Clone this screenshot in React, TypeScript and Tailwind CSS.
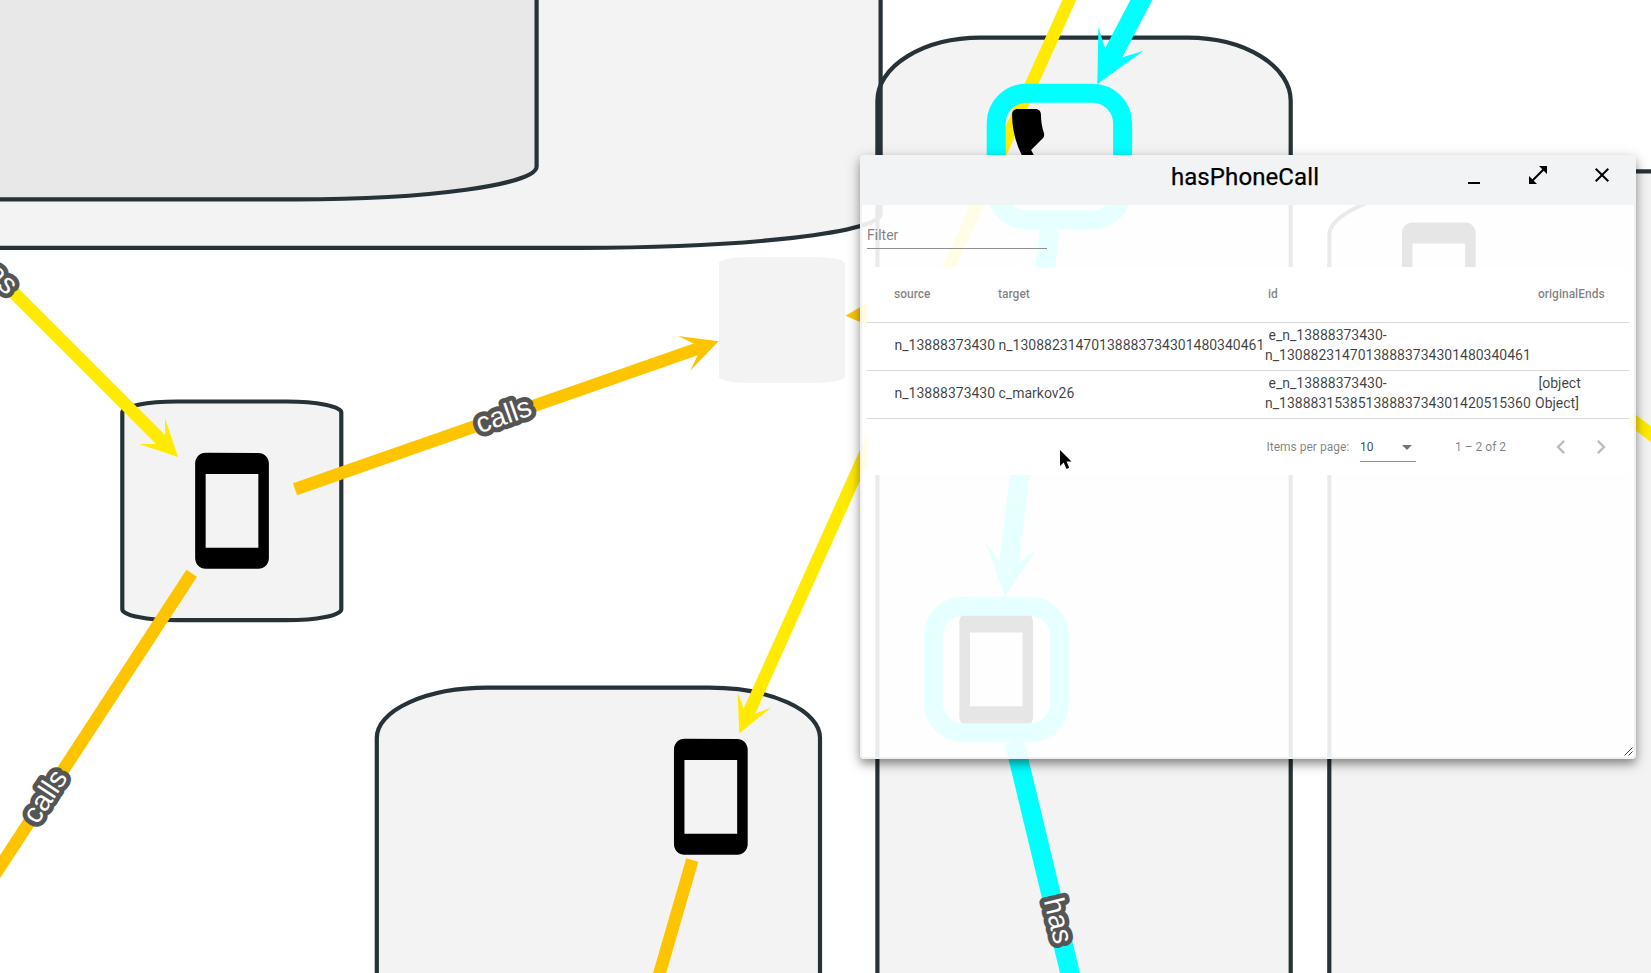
import React from "react";

type Pt = [number, number];

const cylinder = (x1: number, y1: number, x2: number, y2: number, h: number) => {
  const o = (x2 - x1) * 0.25;
  return `M${x1} ${y1 + h}V${y2 - h}A${o} ${h} 0 0 0 ${x1 + o} ${y2}H${x2 - o}A${o} ${h} 0 0 0 ${x2} ${y2 - h}V${y1 + h}A${o} ${h} 0 0 0 ${x2 - o} ${y1}H${x1 + o}A${o} ${h} 0 0 0 ${x1} ${y1 + h}Z`;
};

function Group({ d, fill = "#f3f3f3", stroke = "#263238" }: { d: string; fill?: string; stroke?: string }) {
  return <path d={d} fill={fill} stroke={stroke} strokeWidth={4.2} />;
}

function Edge({ from, to, color, width = 12.6, head = 0 }: { from: Pt; to: Pt; color: string; width?: number; head?: number }) {
  const dx = to[0] - from[0];
  const dy = to[1] - from[1];
  const len = Math.hypot(dx, dy);
  const angle = (Math.atan2(dy, dx) * 180) / Math.PI;
  const notch = head * 0.15;
  return (
    <g transform={`translate(${to[0]} ${to[1]}) rotate(${angle})`} fill={color}>
      <rect x={-len} y={-width / 2} width={len - notch} height={width} />
      {head > 0 && <path d={`M0 0L${-head * 0.3} ${-head * 0.15}L${-notch} 0L${-head * 0.3} ${head * 0.15}Z`} />}
    </g>
  );
}

function EdgeLabel({ x, y, angle, text }: { x: number; y: number; angle: number; text: string }) {
  return (
    <text
      transform={`translate(${x} ${y}) rotate(${angle})`}
      textAnchor="middle"
      y={8}
      className="fill-white font-['Liberation_Sans',sans-serif] text-[28.5px]"
      stroke="#555"
      strokeWidth={9.6}
      strokeLinejoin="round"
      paintOrder="stroke"
    >
      {text}
    </text>
  );
}

function Mobile({ x, y }: { x: number; y: number }) {
  return (
    <path
      transform={`translate(${x} ${y}) scale(5.27) translate(-12 -12)`}
      d="M17 1.01L7 1c-1.1 0-1.99.9-1.99 2v18c0 1.1.89 2 1.99 2h10c1.1 0 2-.9 2-2V3c0-1.1-.9-1.99-2-1.99zM17 19H7V5h10v14z"
    />
  );
}

function Ring({ x, y }: { x: number; y: number }) {
  return <rect x={x - 63.2} y={y - 63.2} width={126.4} height={126.4} rx={30} fill="none" stroke="#00ffff" strokeWidth={19} />;
}

function Graph() {
  return (
    <svg className="absolute inset-0" width="1651" height="973" viewBox="0 0 1651 973">
      <Group d={cylinder(-320, -600, 880.6, 247.8, 34)} stroke="none" />
      <Group d={cylinder(-427, -500, 536.6, 199.4, 33)} fill="#e8e8e8" />
      <Group d={cylinder(122.3, 401.5, 341.3, 620.2, 11)} />
      <Group d={cylinder(376.8, 687.7, 820, 1700, 50)} />
      <Group d={cylinder(877.4, 37.7, 1290.7, 1300, 63)} />
      {/* the outer group's border stays visible where the call group overlaps it */}
      <Group d={cylinder(-320, -600, 880.6, 247.8, 34)} fill="none" />
      <Group d={cylinder(1329.3, 171.3, 2429, 1400, 64)} />
      <Group d={cylinder(719, 257, 845, 383, 6.3)} stroke="none" />

      <Edge from={[-40, 239]} to={[178, 457]} color="#ffea00" head={122} />
      <Edge from={[1078.3, -20]} to={[739.3, 733.5]} color="#ffea00" head={122} />
      <Edge from={[1629, 417.5]} to={[1661, 441.5]} color="#ffea00" />
      <Edge from={[295, 489.3]} to={[718.7, 341.3]} color="#ffc400" head={122} />
      <Edge from={[191.7, 573.3]} to={[-13.5, 887.5]} color="#ffc400" />
      <Edge from={[692.3, 860]} to={[653.8, 993]} color="#ffc400" />
      <Edge from={[1000, 306]} to={[845.5, 315.8]} color="#ffc400" head={122} />

      <Edge from={[1151.8, -20]} to={[1097.3, 84]} color="#00ffff" width={19.4} head={170} />
      <Edge from={[1049.7, 230]} to={[1005, 596.5]} color="#00ffff" width={19.4} head={170} />
      <Edge from={[1014.5, 742.5]} to={[1074.8, 993]} color="#00ffff" width={19.4} />

      <path
        transform="translate(996.3 93.3) scale(5.25)"
        d="M6.62 10.79c1.44 2.83 3.76 5.14 6.59 6.59l2.2-2.2c.27-.27.67-.36 1.02-.24 1.12.37 2.33.57 3.57.57.55 0 1 .45 1 1V20c0 .55-.45 1-1 1-9.39 0-17-7.61-17-17 0-.55.45-1 1-1h3.5c.55 0 1 .45 1 1 0 1.25.2 2.45.57 3.57.11.35.03.74-.25 1.02l-2.2 2.2z"
      />
      <Mobile x={232} y={510.8} />
      <Mobile x={710.8} y={796.8} />
      <Mobile x={996.2} y={669.4} />
      <Mobile x={1438.8} y={280.5} />
      <Ring x={1059.4} y={156.5} />
      <Ring x={996.5} y={669.5} />

      <EdgeLabel x={-4} y={274} angle={45} text="has" />
      <EdgeLabel x={504} y={416.5} angle={-19.3} text="calls" />
      <EdgeLabel x={46} y={797} angle={-56.9} text="calls" />
      <EdgeLabel x={1057} y={921} angle={76.5} text="has" />
    </svg>
  );
}

const rows = [
  {
    source: "n_13888373430",
    target: "n_13088231470138883734301480340461",
    id: ["e_n_13888373430-", "n_13088231470138883734301480340461"],
    ends: [] as string[],
  },
  {
    source: "n_13888373430",
    target: "c_markov26",
    id: ["e_n_13888373430-", "n_13888315385138883734301420515360"],
    ends: ["[object", "Object]"],
  },
];

function Wrapped({ lines }: { lines: string[] }) {
  return (
    <div className="-ml-[3.5px] whitespace-nowrap pb-[2px] leading-5">
      {lines.map((l, i) => (
        <div key={l} className={i === 0 ? "pl-[3.5px]" : ""}>
          {l}
        </div>
      ))}
    </div>
  );
}

function Dialog() {
  return (
    <section className="absolute left-[860px] top-[155px] flex h-[604px] w-[776px] flex-col overflow-hidden rounded-[4px] font-[Roboto,sans-serif] shadow-[0_5px_8px_-1px_rgba(0,0,0,0.32),0_4px_14px_1px_rgba(0,0,0,0.22)]">
      <header className="flex h-[50px] shrink-0 items-start bg-[#f1f3f5]">
        <div className="w-[576px] pl-[194px] pt-[6px] text-center leading-8 text-black">
          <h2 className="whitespace-nowrap text-[24px] font-normal tracking-[0.1px] [-webkit-text-stroke:0.25px_black]">hasPhoneCall</h2>
        </div>
        <div className="ml-auto flex pr-[22px] pt-[8px]">
          <svg className="mr-10" width="24" height="24" viewBox="0 0 24 24">
            <path d="M6 19h12v2H6z" />
          </svg>
          <svg className="mr-10" width="24" height="24" viewBox="0 0 24 24">
            <path d="M21 11V3h-8l3.29 3.29-10 10L3 13v8h8l-3.29-3.29 10-10z" />
          </svg>
          <svg width="24" height="24" viewBox="0 0 24 24">
            <path d="M19 6.41L17.59 5 12 10.59 6.41 5 5 6.41 10.59 12 5 17.59 6.41 19 12 13.41 17.59 19 19 17.59 13.41 12z" />
          </svg>
        </div>
      </header>
      <div className="relative flex grow flex-col rounded-b-[4px] border-2 border-t-0 border-[#f1f1f1] bg-white/90 bg-clip-padding px-[5px]">
        <div className="h-[62px]">
          <div className="h-[44px] w-[180px] border-b border-[#8f8f8f] pt-[20px] text-[14px] leading-5 text-black/50">Filter</div>
        </div>
        <div className="h-[208px] bg-white text-[14px] text-black/75">
          <div className="flex h-[56px] items-center border-b border-black/15 pb-[2px] pl-[27px] text-[12px] font-medium text-black/50">
            <span className="w-[104px]">source</span>
            <span className="w-[270px]">target</span>
            <span className="w-[270px]">id</span>
            <span>originalEnds</span>
          </div>
          {rows.map((r) => (
            <div key={r.target} className="flex h-[48px] items-center border-b border-black/15 pb-[2px] pl-[27.5px]">
              <span className="w-[104px]">{r.source}</span>
              <span className="w-[270px] whitespace-nowrap">{r.target}</span>
              <div className="w-[270px]">
                <Wrapped lines={r.id} />
              </div>
              <Wrapped lines={r.ends} />
            </div>
          ))}
          <div className="flex h-[56px] items-center pl-[399.5px] text-[12px] text-black/50">
            <span className="w-[93.5px]">Items per page:</span>
            <span className="mt-[5px] flex h-[24px] w-[56px] justify-between border-b border-[#8f8f8f] leading-[18px] text-black/75">
              10
              <svg className="mr-[4px] mt-[7px]" width="10" height="5" viewBox="0 0 10 5">
                <path d="M0 0h10L5 5z" fill="#757575" />
              </svg>
            </span>
            <span className="ml-[39px] w-[92px]">1 – 2 of 2</span>
            <svg width="28" height="28" viewBox="0 0 24 24" fill="#bdbdbd">
              <path d="M15.41 7.41L14 6l-6 6 6 6 1.41-1.41L10.83 12z" />
            </svg>
            <svg className="ml-3" width="28" height="28" viewBox="0 0 24 24" fill="#bdbdbd">
              <path d="M10 6L8.59 7.41 13.17 12l-4.58 4.59L10 18l6-6z" />
            </svg>
          </div>
        </div>
        <svg className="absolute bottom-[1px] right-[1px]" width="9" height="9" viewBox="0 0 9 9" stroke="#444" strokeWidth="1">
          <path d="M0.5 8.5L8.5 0.5M4.5 8.5L8.5 4.5" />
        </svg>
      </div>
    </section>
  );
}

export default function App() {
  return (
    <main className="relative h-[973px] w-[1651px] overflow-hidden bg-white">
      <Graph />
      <Dialog />
      <svg className="absolute left-[1060px] top-[450px]" width="12" height="19" viewBox="0 0 12 19">
        <path d="M0 0v16l3.7-3.5L6.5 19l2.7-1.2L6.5 11.5H11.5z" />
      </svg>
    </main>
  );
}
